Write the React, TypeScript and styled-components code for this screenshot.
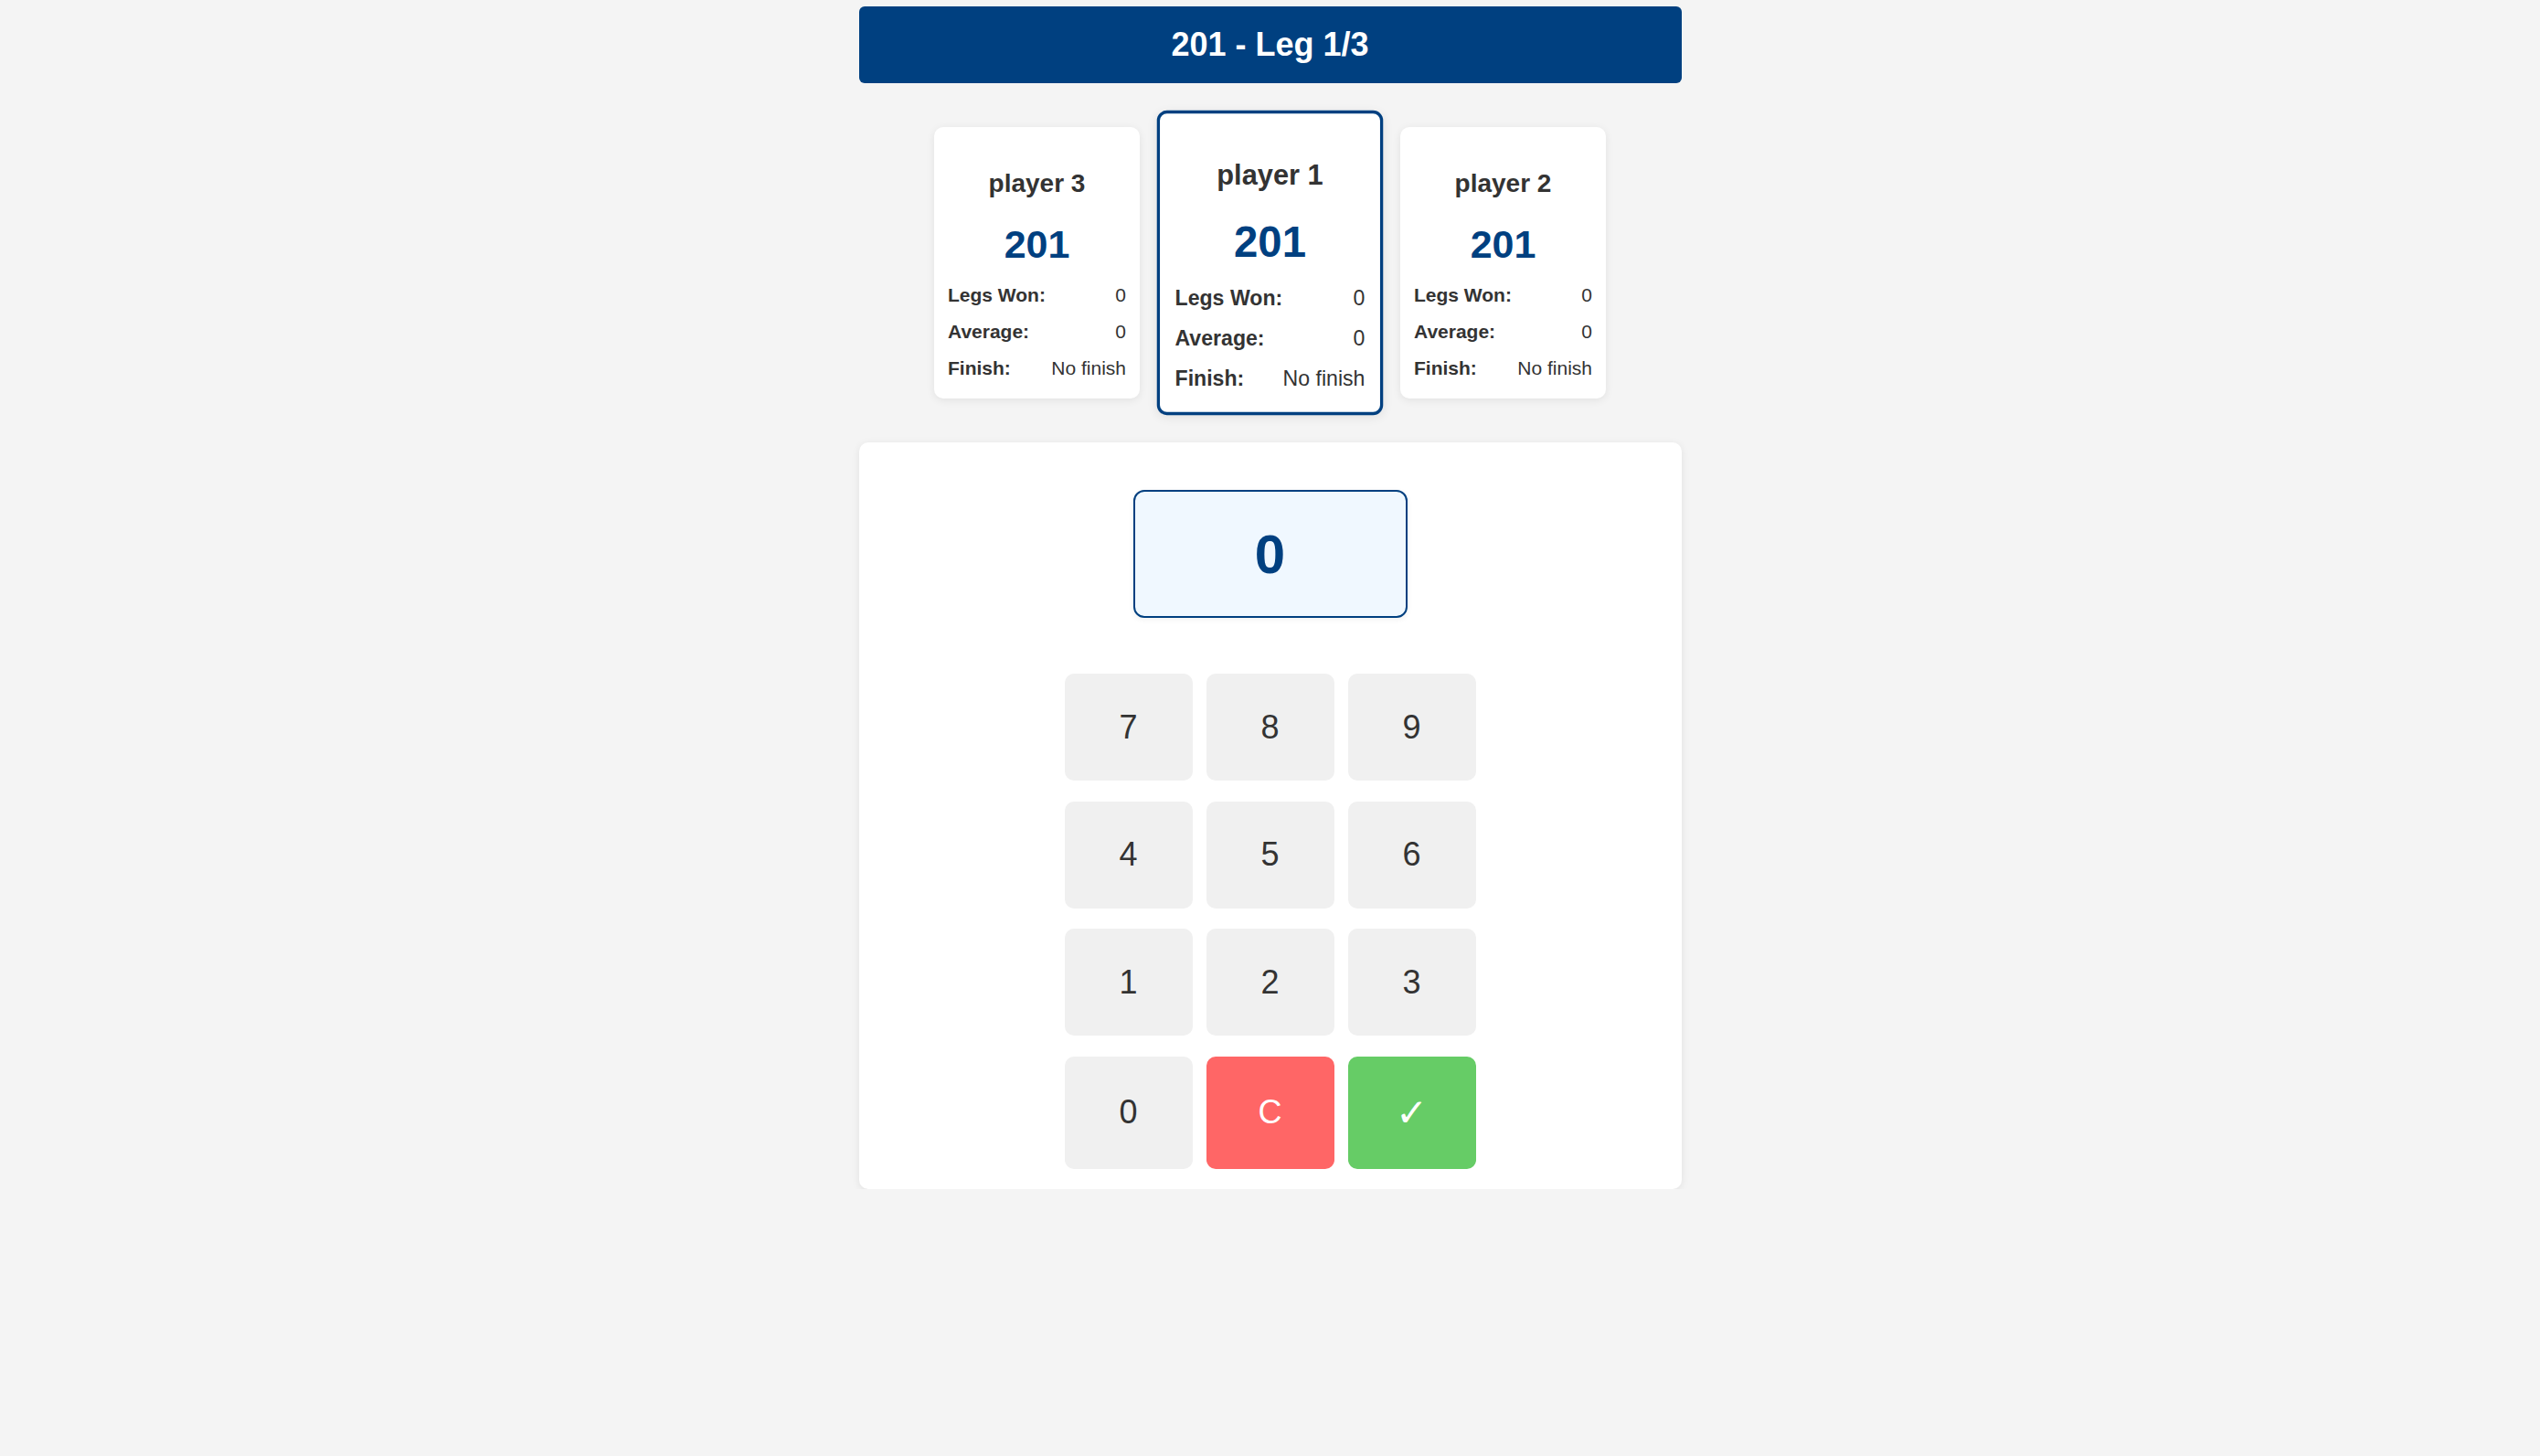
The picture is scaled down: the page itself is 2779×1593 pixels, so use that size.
import React from "react";
import styled, { createGlobalStyle, css } from "styled-components";

const NAVY = "#004080";

const GlobalStyle = createGlobalStyle`
  html, body {
    margin: 0;
    padding: 0;
    background: #f4f4f4;
    font-family: "Liberation Sans", Arial, sans-serif;
    color: #333;
  }
  * { box-sizing: border-box; }
`;

const Page = styled.div`
  width: 900px;
  margin: 0 auto;
  padding-top: 7px;
  display: flex;
  flex-direction: column;
`;

const Header = styled.header`
  height: 84px;
  background: ${NAVY};
  color: #fff;
  border-radius: 6px;
  display: flex;
  align-items: center;
  justify-content: center;
  font-size: 36px;
  font-weight: bold;
`;

const CardRow = styled.div`
  display: flex;
  justify-content: center;
  align-items: center;
  gap: 30px;
  margin: 45px 0;
`;

const Card = styled.div<{ $active?: boolean }>`
  width: 225px;
  background: #fff;
  border-radius: 10px;
  padding: 15px 15px 21px;
  box-shadow: 0 2px 10px rgba(0, 0, 0, 0.08);
  display: flex;
  flex-direction: column;
  ${(p) =>
    p.$active &&
    css`
      border: 3px solid ${NAVY};
      transform: scale(1.1);
    `}
`;

const PlayerName = styled.div`
  margin-top: 31px;
  font-size: 28px;
  line-height: 32px;
  font-weight: bold;
  text-align: center;
  color: #333;
`;

const Score = styled.div`
  margin-top: 26px;
  font-size: 43px;
  line-height: 49px;
  font-weight: bold;
  text-align: center;
  color: ${NAVY};
`;

const Stats = styled.div`
  margin-top: 19px;
  display: flex;
  flex-direction: column;
  gap: 16px;
`;

const StatRow = styled.div`
  display: flex;
  justify-content: space-between;
  font-size: 21px;
  line-height: 24px;
`;

const StatLabel = styled.span`
  font-weight: bold;
`;

const StatValue = styled.span`
  font-weight: normal;
`;

const Panel = styled.section`
  background: #fff;
  border-radius: 10px;
  box-shadow: 0 2px 10px rgba(0, 0, 0, 0.08);
  padding: 52px 0 22px;
  display: flex;
  flex-direction: column;
  align-items: center;
`;

const Display = styled.div`
  width: 300px;
  height: 140px;
  border: 2px solid ${NAVY};
  border-radius: 12px;
  background: #f0f8ff;
  color: ${NAVY};
  font-size: 60px;
  font-weight: bold;
  display: flex;
  align-items: center;
  justify-content: center;
  box-shadow: 0 2px 6px rgba(0, 0, 0, 0.06);
  margin-bottom: 61px;
`;

const Keypad = styled.div`
  display: grid;
  grid-template-columns: repeat(3, 140px);
  grid-template-rows: 117px 117px 117px 123px;
  column-gap: 15px;
  row-gap: 22.5px;
`;

const Key = styled.button<{ $variant?: "clear" | "ok" }>`
  border: none;
  border-radius: 10px;
  background: #f0f0f0;
  color: #333;
  font-family: "Liberation Sans", Arial, sans-serif;
  font-size: 36px;
  display: flex;
  align-items: center;
  justify-content: center;
  padding: 0;
  cursor: pointer;
  ${(p) =>
    p.$variant === "clear" &&
    css`
      background: #ff6666;
      color: #fff;
    `}
  ${(p) =>
    p.$variant === "ok" &&
    css`
      background: #66cc66;
      color: #fff;
      font-family: "DejaVu Sans", sans-serif;
      font-size: 42px;
    `}
`;

type Player = { name: string; score: number; active?: boolean };

const players: Player[] = [
  { name: "player 3", score: 201 },
  { name: "player 1", score: 201, active: true },
  { name: "player 2", score: 201 },
];

const keys: { label: string; variant?: "clear" | "ok" }[] = [
  { label: "7" },
  { label: "8" },
  { label: "9" },
  { label: "4" },
  { label: "5" },
  { label: "6" },
  { label: "1" },
  { label: "2" },
  { label: "3" },
  { label: "0" },
  { label: "C", variant: "clear" },
  { label: "✓", variant: "ok" },
];

export default function App() {
  return (
    <>
      <GlobalStyle />
      <Page>
        <Header>201 - Leg 1/3</Header>
        <CardRow>
          {players.map((p) => (
            <Card key={p.name} $active={p.active}>
              <PlayerName>{p.name}</PlayerName>
              <Score>{p.score}</Score>
              <Stats>
                <StatRow>
                  <StatLabel>Legs Won:</StatLabel>
                  <StatValue>0</StatValue>
                </StatRow>
                <StatRow>
                  <StatLabel>Average:</StatLabel>
                  <StatValue>0</StatValue>
                </StatRow>
                <StatRow>
                  <StatLabel>Finish:</StatLabel>
                  <StatValue>No finish</StatValue>
                </StatRow>
              </Stats>
            </Card>
          ))}
        </CardRow>
        <Panel>
          <Display>0</Display>
          <Keypad>
            {keys.map((k) => (
              <Key key={k.label} $variant={k.variant}>
                {k.label}
              </Key>
            ))}
          </Keypad>
        </Panel>
      </Page>
    </>
  );
}
